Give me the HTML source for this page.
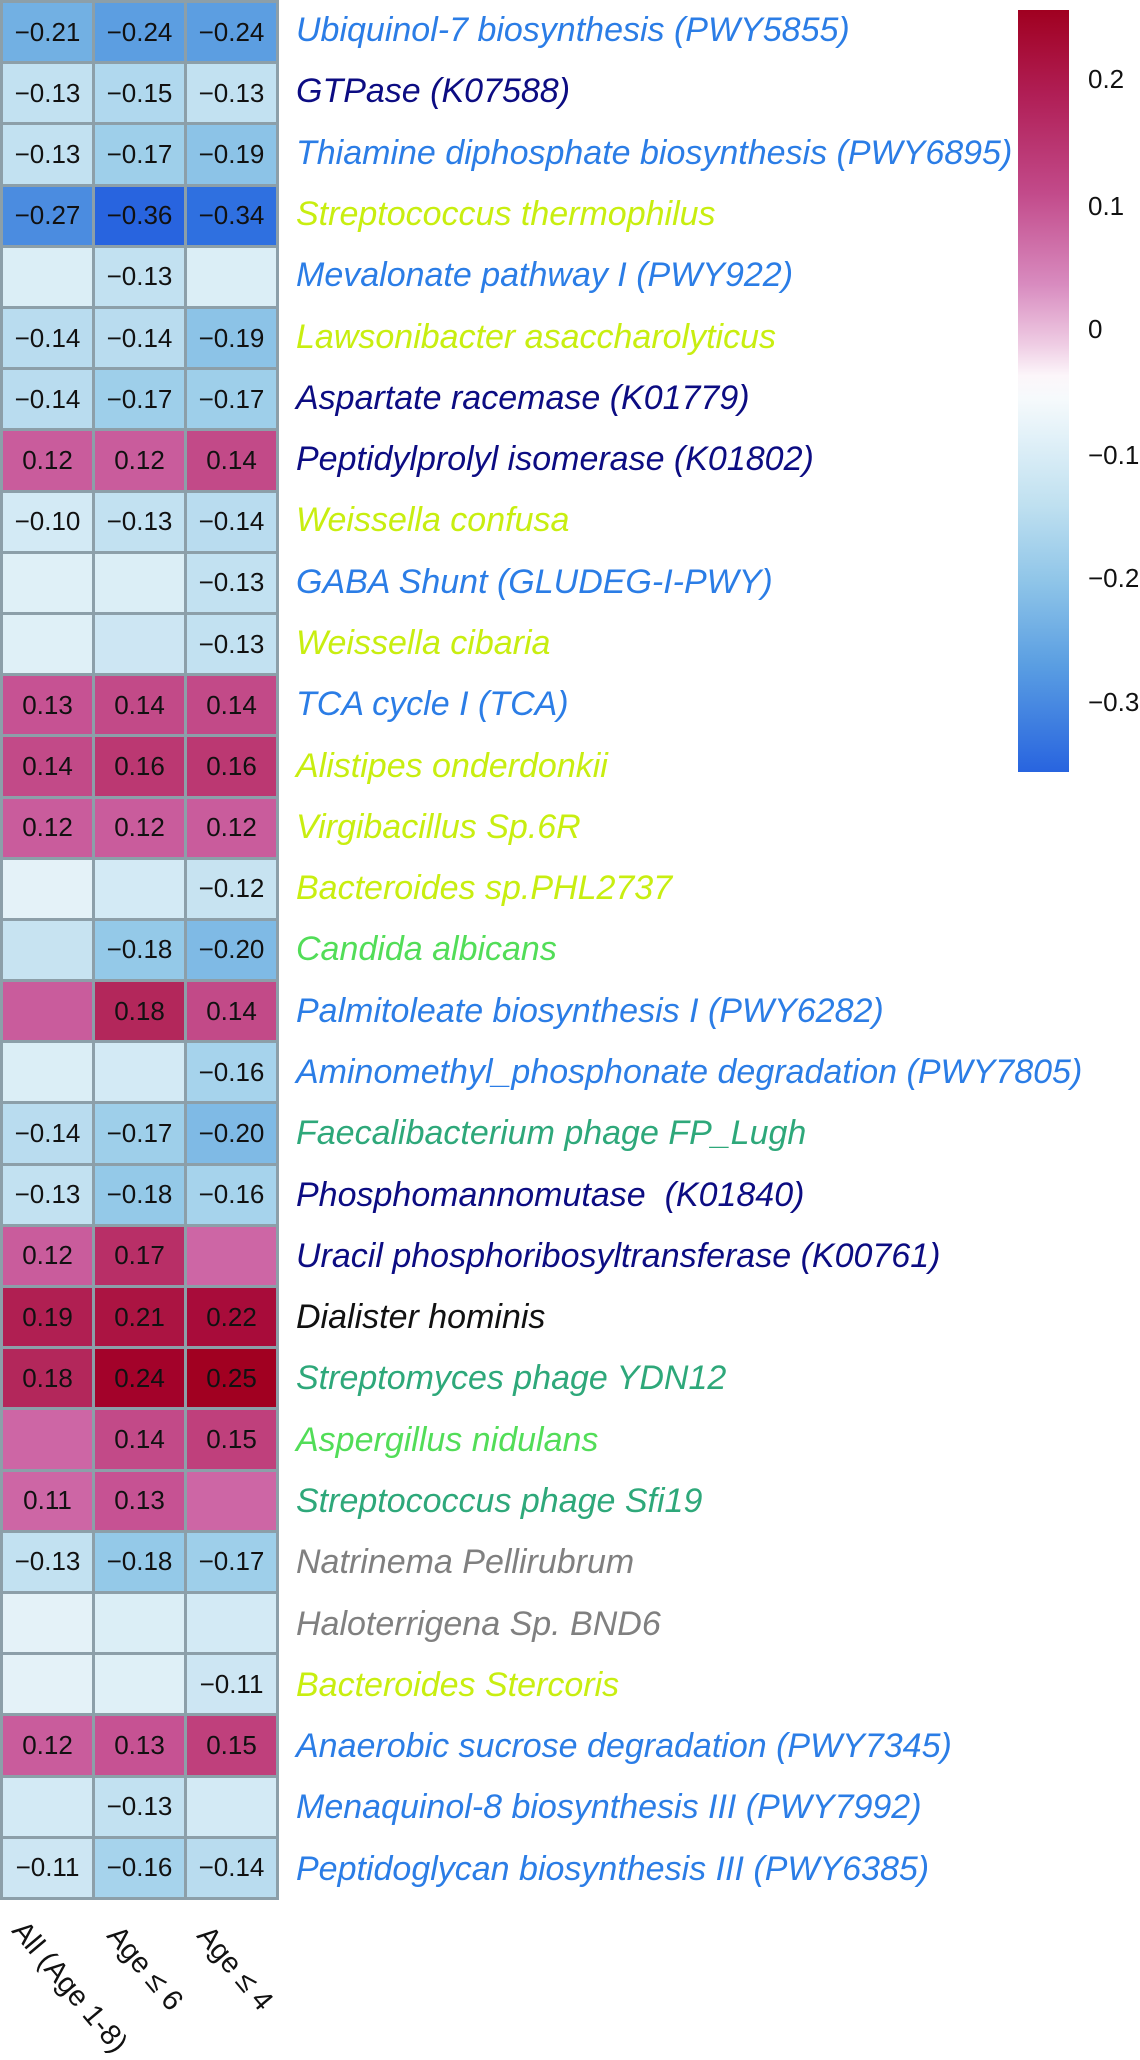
<!DOCTYPE html>
<html><head><meta charset="utf-8"><style>
body{margin:0;width:1140px;height:2037px;background:#fff;position:relative;overflow:hidden;font-family:"Liberation Sans",sans-serif}
.g{position:absolute;left:0;top:0;width:279px;height:1900px;box-sizing:border-box;display:grid;grid-template-columns:repeat(3,1fr);grid-template-rows:repeat(31,1fr);gap:3px;padding:3px;background:#8c9fa9}
.g div{display:flex;align-items:center;justify-content:center;font-size:26px;color:#111}
.l{position:absolute;left:0;top:0}
.l div{position:absolute;left:296px;height:61.29px;line-height:61.29px;font-size:34px;font-style:italic;white-space:nowrap}
.b{color:#2b7de6}.n{color:#0c0c82}.y{color:#c8ee10}.gr{color:#52dd58}.t{color:#2ea87a}.k{color:#111}.x{color:#808080}
.leg{position:absolute;left:1018px;top:10px;width:51px;height:762px;background:linear-gradient(#a00020 0%,#b01e55 11%,#c24a8a 24%,#d88bbf 36%,#efcde4 44%,#fcf6fa 48%,#f6fafc 51%,#e2f1f8 56%,#bfe0f0 65%,#8fc5e8 75%,#5a9ee2 86%,#2864df 100%)}
.tk{position:absolute;left:1088px;font-size:26px;color:#111}
.cl{position:absolute;font-size:29px;color:#111;transform-origin:0 0;transform:rotate(50deg);white-space:nowrap}
</style></head><body>
<div class="g">
<div style="background:#72b0e3">−0.21</div><div style="background:#5c9ee1">−0.24</div><div style="background:#5c9ee1">−0.24</div>
<div style="background:#c2e1f1">−0.13</div><div style="background:#b0d8ee">−0.15</div><div style="background:#c2e1f1">−0.13</div>
<div style="background:#c2e1f1">−0.13</div><div style="background:#9ecfea">−0.17</div><div style="background:#8cc3e7">−0.19</div>
<div style="background:#4b8ce0">−0.27</div><div style="background:#2864df">−0.36</div><div style="background:#2f70e0">−0.34</div>
<div style="background:#dbeef6"></div><div style="background:#c2e1f1">−0.13</div><div style="background:#dbeef6"></div>
<div style="background:#b9dcef">−0.14</div><div style="background:#b9dcef">−0.14</div><div style="background:#8cc3e7">−0.19</div>
<div style="background:#b9dcef">−0.14</div><div style="background:#9ecfea">−0.17</div><div style="background:#9ecfea">−0.17</div>
<div style="background:#c95c9c">0.12</div><div style="background:#c95c9c">0.12</div><div style="background:#c24a88">0.14</div>
<div style="background:#d3eaf5">−0.10</div><div style="background:#c2e1f1">−0.13</div><div style="background:#b9dcef">−0.14</div>
<div style="background:#dff0f7"></div><div style="background:#dbeef6"></div><div style="background:#c2e1f1">−0.13</div>
<div style="background:#dff0f7"></div><div style="background:#cde6f3"></div><div style="background:#c2e1f1">−0.13</div>
<div style="background:#c65293">0.13</div><div style="background:#c24a88">0.14</div><div style="background:#c24a88">0.14</div>
<div style="background:#c24a88">0.14</div><div style="background:#bb3872">0.16</div><div style="background:#bb3872">0.16</div>
<div style="background:#c95c9c">0.12</div><div style="background:#c95c9c">0.12</div><div style="background:#c95c9c">0.12</div>
<div style="background:#e4f2f8"></div><div style="background:#d3eaf5"></div><div style="background:#c7e3f1">−0.12</div>
<div style="background:#c7e3f1"></div><div style="background:#94c9e8">−0.18</div><div style="background:#7fbae5">−0.20</div>
<div style="background:#c95c9c"></div><div style="background:#b3275b">0.18</div><div style="background:#c24a88">0.14</div>
<div style="background:#dbeef6"></div><div style="background:#d3eaf5"></div><div style="background:#a6d3ec">−0.16</div>
<div style="background:#b9dcef">−0.14</div><div style="background:#9ecfea">−0.17</div><div style="background:#7fbae5">−0.20</div>
<div style="background:#c2e1f1">−0.13</div><div style="background:#94c9e8">−0.18</div><div style="background:#a6d3ec">−0.16</div>
<div style="background:#c95c9c">0.12</div><div style="background:#b82f67">0.17</div><div style="background:#cd66a5"></div>
<div style="background:#b01f52">0.19</div><div style="background:#ab1442">0.21</div><div style="background:#a80c3a">0.22</div>
<div style="background:#b3275b">0.18</div><div style="background:#a3022a">0.24</div><div style="background:#a10021">0.25</div>
<div style="background:#cd66a5"></div><div style="background:#c24a88">0.14</div><div style="background:#bf407c">0.15</div>
<div style="background:#cd66a5">0.11</div><div style="background:#c65293">0.13</div><div style="background:#cd66a5"></div>
<div style="background:#c2e1f1">−0.13</div><div style="background:#94c9e8">−0.18</div><div style="background:#9ecfea">−0.17</div>
<div style="background:#e4f2f8"></div><div style="background:#dbeef6"></div><div style="background:#d3eaf5"></div>
<div style="background:#e4f2f8"></div><div style="background:#dff0f7"></div><div style="background:#cde6f3">−0.11</div>
<div style="background:#c95c9c">0.12</div><div style="background:#c65293">0.13</div><div style="background:#bf407c">0.15</div>
<div style="background:#d3eaf5"></div><div style="background:#c2e1f1">−0.13</div><div style="background:#d3eaf5"></div>
<div style="background:#cde6f3">−0.11</div><div style="background:#a6d3ec">−0.16</div><div style="background:#b9dcef">−0.14</div>
</div>
<div class="l">
<div class="b" style="top:0px">Ubiquinol-7 biosynthesis (PWY5855)</div>
<div class="n" style="top:61.3px">GTPase (K07588)</div>
<div class="b" style="top:122.6px">Thiamine diphosphate biosynthesis (PWY6895)</div>
<div class="y" style="top:183.9px">Streptococcus thermophilus</div>
<div class="b" style="top:245.2px">Mevalonate pathway I (PWY922)</div>
<div class="y" style="top:306.5px">Lawsonibacter asaccharolyticus</div>
<div class="n" style="top:367.7px">Aspartate racemase (K01779)</div>
<div class="n" style="top:429px">Peptidylprolyl isomerase (K01802)</div>
<div class="y" style="top:490.3px">Weissella confusa</div>
<div class="b" style="top:551.6px">GABA Shunt (GLUDEG-I-PWY)</div>
<div class="y" style="top:612.9px">Weissella cibaria</div>
<div class="b" style="top:674.2px">TCA cycle I (TCA)</div>
<div class="y" style="top:735.5px">Alistipes onderdonkii</div>
<div class="y" style="top:796.8px">Virgibacillus Sp.6R</div>
<div class="y" style="top:858px">Bacteroides sp.PHL2737</div>
<div class="gr" style="top:919.3px">Candida albicans</div>
<div class="b" style="top:980.6px">Palmitoleate biosynthesis I (PWY6282)</div>
<div class="b" style="top:1041.9px">Aminomethyl_phosphonate degradation (PWY7805)</div>
<div class="t" style="top:1103.2px">Faecalibacterium phage FP_Lugh</div>
<div class="n" style="top:1164.5px">Phosphomannomutase &nbsp;(K01840)</div>
<div class="n" style="top:1225.8px">Uracil phosphoribosyltransferase (K00761)</div>
<div class="k" style="top:1287.1px">Dialister hominis</div>
<div class="t" style="top:1348.3px">Streptomyces phage YDN12</div>
<div class="gr" style="top:1409.6px">Aspergillus nidulans</div>
<div class="t" style="top:1470.9px">Streptococcus phage Sfi19</div>
<div class="x" style="top:1532.2px">Natrinema Pellirubrum</div>
<div class="x" style="top:1593.5px">Haloterrigena Sp. BND6</div>
<div class="y" style="top:1654.8px">Bacteroides Stercoris</div>
<div class="b" style="top:1716.1px">Anaerobic sucrose degradation (PWY7345)</div>
<div class="b" style="top:1777.4px">Menaquinol-8 biosynthesis III (PWY7992)</div>
<div class="b" style="top:1838.6px">Peptidoglycan biosynthesis III (PWY6385)</div>
</div>
<div class="leg"></div>
<div class="tk" style="top:64px">0.2</div>
<div class="tk" style="top:191px">0.1</div>
<div class="tk" style="top:314px">0</div>
<div class="tk" style="top:440px">−0.1</div>
<div class="tk" style="top:563px">−0.2</div>
<div class="tk" style="top:687px">−0.3</div>
<div class="cl" style="left:30px;top:1915px">All (Age 1-8)</div>
<div class="cl" style="left:125px;top:1920px">Age ≤ 6</div>
<div class="cl" style="left:215px;top:1920px">Age ≤ 4</div>
</body></html>
